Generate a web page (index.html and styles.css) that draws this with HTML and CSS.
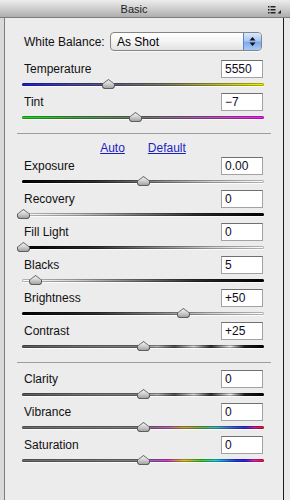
FILE: index.html
```html
<!doctype html>
<html lang="en">
	<head>
		<meta charset="UTF-8">
		<title>Basic</title>
		<link rel="stylesheet" href="styles.css">
	</head>
	<body>
		<div class="titlebar">
			<span class="title">Basic</span>
			<span class="menu-btn">
				<svg width="14" height="9" viewBox="0 0 14 9">
					<rect x="0" y="1" width="1.5" height="1.5" fill="#222"/>
					<rect x="2.5" y="1" width="5" height="1.5" fill="#222"/>
					<rect x="0" y="4" width="1.5" height="1.5" fill="#222"/>
					<rect x="2.5" y="4" width="5" height="1.5" fill="#222"/>
					<rect x="0" y="7" width="1.5" height="1.5" fill="#222"/>
					<rect x="2.5" y="7" width="5" height="1.5" fill="#222"/>
					<polygon points="9.5,8.5 13,8.5 13,5" fill="#222"/>
				</svg>
			</span>
		</div>
		<div class="main">
			<div class="gutter"></div>
			<div class="panel">
				<div class="wb-row">
					<span class="label">White Balance:</span>
					<div class="select">
						<span class="select-text">As Shot</span>
						<span class="select-btn">
							<svg width="7" height="11" viewBox="0 0 7 11">
								<polygon points="3.5,1 6.5,4.5 0.5,4.5" fill="#111"/>
								<polygon points="0.5,6.5 6.5,6.5 3.5,10" fill="#111"/>
							</svg>
						</span>
					</div>
				</div>

				<div class="slider first">
					<div class="slider-head"><span class="label">Temperature</span><span class="value">5550</span></div>
					<div class="slider-body"><div class="track track-temp"></div><span class="thumb" style="left: 35.5%"></span></div>
				</div>
				<div class="slider">
					<div class="slider-head"><span class="label">Tint</span><span class="value">&minus;7</span></div>
					<div class="slider-body"><div class="track track-tint"></div><span class="thumb" style="left: 46.7%"></span></div>
				</div>

				<div class="divider"></div>

				<div class="links">
					<a href="javascript:;">Auto</a>
					<a href="javascript:;">Default</a>
				</div>

				<div class="slider">
					<div class="slider-head"><span class="label">Exposure</span><span class="value">0.00</span></div>
					<div class="slider-body"><div class="track track-dark-light"></div><span class="thumb" style="left: 50%"></span></div>
				</div>
				<div class="slider">
					<div class="slider-head"><span class="label">Recovery</span><span class="value">0</span></div>
					<div class="slider-body"><div class="track track-light-dark"></div><span class="thumb" style="left: 0.4%"></span></div>
				</div>
				<div class="slider">
					<div class="slider-head"><span class="label">Fill Light</span><span class="value">0</span></div>
					<div class="slider-body"><div class="track track-dark-light"></div><span class="thumb" style="left: 0.4%"></span></div>
				</div>
				<div class="slider">
					<div class="slider-head"><span class="label">Blacks</span><span class="value">5</span></div>
					<div class="slider-body"><div class="track track-light-dark"></div><span class="thumb" style="left: 5.4%"></span></div>
				</div>
				<div class="slider">
					<div class="slider-head"><span class="label">Brightness</span><span class="value">+50</span></div>
					<div class="slider-body"><div class="track track-dark-light"></div><span class="thumb" style="left: 66.5%"></span></div>
				</div>
				<div class="slider">
					<div class="slider-head"><span class="label">Contrast</span><span class="value">+25</span></div>
					<div class="slider-body"><div class="track track-contrast"></div><span class="thumb" style="left: 50%"></span></div>
				</div>

				<div class="divider"></div>

				<div class="slider first">
					<div class="slider-head"><span class="label">Clarity</span><span class="value">0</span></div>
					<div class="slider-body"><div class="track track-contrast"></div><span class="thumb" style="left: 50%"></span></div>
				</div>
				<div class="slider">
					<div class="slider-head"><span class="label">Vibrance</span><span class="value">0</span></div>
					<div class="slider-body"><div class="track track-vibrance"></div><span class="thumb" style="left: 50%"></span></div>
				</div>
				<div class="slider">
					<div class="slider-head"><span class="label">Saturation</span><span class="value">0</span></div>
					<div class="slider-body"><div class="track track-saturation"></div><span class="thumb" style="left: 50%"></span></div>
				</div>
			</div>
			<div class="edge"></div>
		</div>
	</body>
</html>
```

FILE: styles.css
```css
html,
body {
	margin: 0;
	padding: 0;
	height: 100%;
}

body {
	font-family: "Liberation Sans", Arial, sans-serif;
	font-size: 12px;
	color: #111111;
	background: #e9e9e9;
	display: flex;
	flex-direction: column;
}

.titlebar {
	height: 17px;
	border-bottom: 1px solid #7c7c7c;
	background: linear-gradient(#ececec, #d2d2d2 45%, #adadad);
	display: flex;
	align-items: center;
}

.title {
	flex: 1;
	text-align: center;
	font-size: 11px;
	color: #1e1e1e;
}

.menu-btn {
	width: 22px;
	display: flex;
	padding-top: 1px;
}

.menu-btn svg {
	display: block;
}

.main {
	flex: 1;
	display: flex;
}

.gutter {
	width: 4px;
	background: #dadada;
}

.panel {
	width: 242px;
	padding: 14px 19px 0 17px;
	background: #ececec;
	border-left: 1px solid #7e7e7e;
	border-right: 1px solid #1c1c1c;
}

.edge {
	flex: 1;
	background: #e9e9e9;
}

.label {
	padding-left: 2px;
	color: #111111;
}

/* white balance popup */
.wb-row {
	height: 19px;
	display: flex;
	align-items: center;
	justify-content: space-between;
}

.select {
	width: 150px;
	height: 17px;
	margin-right: 2px;
	border: 1px solid #858585;
	border-radius: 4px;
	background: linear-gradient(#ffffff, #f4f4f4 50%, #e2e2e2);
	display: flex;
	align-items: center;
	overflow: hidden;
	box-shadow: 0 1px 0 rgba(255, 255, 255, 0.7);
}

.select-text {
	flex: 1;
	padding-left: 6px;
	font-size: 12px;
	color: #000000;
}

.select-btn {
	width: 17px;
	height: 17px;
	border-left: 1px solid #5d83c8;
	background: linear-gradient(#dbe8fb, #a9c8f3 45%, #7eaaee 55%, #a8cbf7);
	display: flex;
	align-items: center;
	justify-content: center;
}

.select-btn svg {
	display: block;
}

/* sliders */
.slider {
	height: 33px;
}

.slider.first {
	margin-top: 9px;
}

.divider + .slider.first {
	margin-top: 7px;
}

.slider-head {
	height: 18px;
	display: flex;
	align-items: center;
	justify-content: space-between;
}

.value {
	width: 37px;
	height: 16px;
	line-height: 16px;
	margin-right: 1px;
	padding-left: 3px;
	background: #ffffff;
	border: 1px solid #a2a2a2;
	border-top-color: #707070;
	color: #0c0c1e;
}

.slider-body {
	height: 15px;
	position: relative;
}

.track {
	position: relative;
	top: 5px;
	height: 3px;
	border-radius: 2px;
	box-shadow: inset 0 0 0 1px rgba(0, 0, 0, 0.3), 0 1px 0 rgba(255, 255, 255, 0.8);
}

.thumb {
	position: absolute;
	top: 1px;
	width: 13px;
	height: 10px;
	margin-left: -6px;
	background: #5e5e5e;
	clip-path: polygon(50% 0, 100% 50%, 100% 80%, 85% 100%, 15% 100%, 0 80%, 0 50%);
}

.thumb::after {
	content: "";
	position: absolute;
	left: 1px;
	top: 1px;
	right: 1px;
	bottom: 1px;
	background: linear-gradient(#f4f4f4, #cfcfcf 50%, #a4a4a4);
	clip-path: polygon(50% 0, 100% 50%, 100% 80%, 85% 100%, 15% 100%, 0 80%, 0 50%);
}

.track-temp {
	background: linear-gradient(90deg, #1c22d6, #45459e 20%, #62627a 42%, #7c7c62 60%, #b8b834 80%, #f2f200);
}

.track-tint {
	background: linear-gradient(90deg, #22d622, #4a9c4a 22%, #6a7a6a 45%, #8a6a8a 62%, #c04ac0 82%, #f41cf4);
}

.track-dark-light {
	background: linear-gradient(90deg, #000000, #2e2e2e 30%, #7a7a7a 52%, #d0d0d0 78%, #ffffff);
}

.track-light-dark {
	background: linear-gradient(90deg, #ffffff, #d0d0d0 22%, #7a7a7a 48%, #2e2e2e 72%, #000000);
}

.track-contrast {
	background: linear-gradient(90deg, #5c5c5c, #7a7a7a 30%, #7e7e7e 48%, #b4b4b4 56%, #505050 63%, #d8d8d8 71%, #303030 78%, #eeeeee 86%, #1e1e1e 92%, #000000 100%);
}

.track-vibrance {
	background: linear-gradient(90deg, #6e6e6e, #7e7e7e 45%, #8a6a8a 52%, #b463a8 60%, #c4a040 67%, #6cb04c 74%, #3cb8c0 80%, #3a56d8 88%, #3030d8 92%, #c020a0 96%, #e81c34);
}

.track-saturation {
	background: linear-gradient(90deg, #6e6e6e, #7e7e7e 45%, #9468b4 52%, #d040c8 60%, #e0c020 67%, #40d030 74%, #20d0e0 80%, #2040f0 88%, #3020f0 92%, #e020c0 96%, #ff1030);
}

.divider {
	height: 1px;
	margin: 7px -7px 0 -5px;
	background: #9e9e9e;
}

.links {
	padding: 7px 0 2px;
	line-height: 14px;
	display: flex;
	justify-content: center;
	gap: 23px;
}

.links a {
	color: #1d1dc4;
	text-decoration: underline;
}
```
